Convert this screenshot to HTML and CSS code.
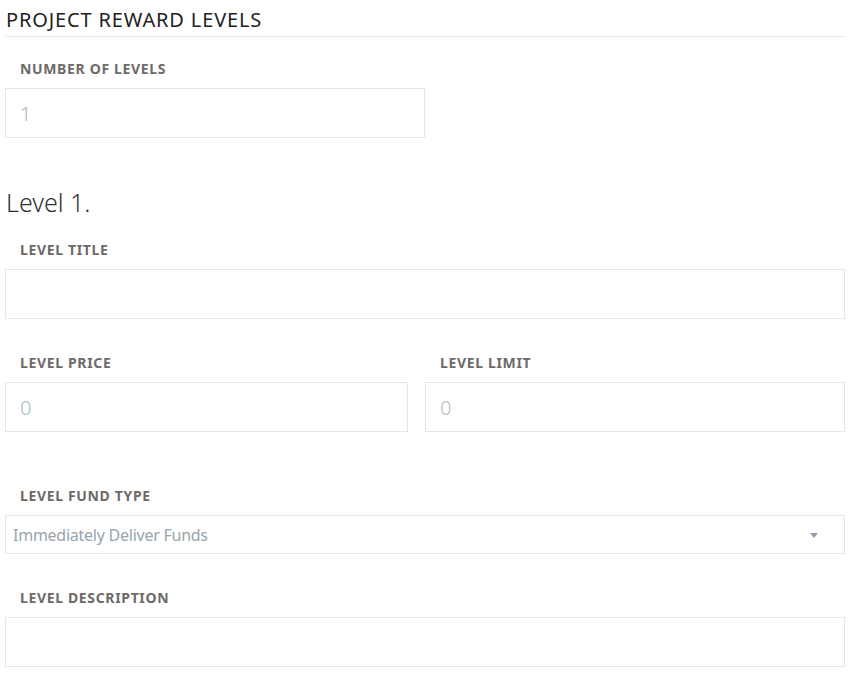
FILE: index.html
```html
<!DOCTYPE html>
<html lang="en">
<head>
<meta charset="utf-8">
<title>Project Reward Levels</title>
<link rel="stylesheet" href="styles.css">
</head>
<body>
<div class="page">
  <div class="section-title">PROJECT REWARD LEVELS</div>

  <div class="group first">
    <label class="label">NUMBER OF LEVELS</label>
    <input class="field half" type="text" placeholder="1">
  </div>

  <h2 class="level-heading">Level 1.</h2>

  <div class="group after-heading">
    <label class="label">LEVEL TITLE</label>
    <input class="field" type="text">
  </div>

  <div class="row two">
    <div class="group">
      <label class="label">LEVEL PRICE</label>
      <input class="field" type="text" placeholder="0">
    </div>
    <div class="group">
      <label class="label">LEVEL LIMIT</label>
      <input class="field" type="text" placeholder="0">
    </div>
  </div>

  <div class="group fund">
    <label class="label">LEVEL FUND TYPE</label>
    <div class="select">
      <span class="select-text">Immediately Deliver Funds</span>
      <span class="caret"></span>
    </div>
  </div>

  <div class="group desc">
    <label class="label">LEVEL DESCRIPTION</label>
    <input class="field" type="text">
  </div>
</div>
</body>
</html>
```

FILE: styles.css
```css
html, body {
  margin: 0;
  padding: 0;
  background: #ffffff;
}

body {
  font-family: "Noto Sans", "Open Sans", Arial, sans-serif;
  color: #222;
}

.page {
  width: 840px;
  padding: 0 11px 0 5px;
}

.section-title {
  font-size: 20px;
  line-height: 24px;
  height: 28px;
  padding-top: 8px;
  padding-left: 1px;
  letter-spacing: 0.85px;
  color: #222;
  border-bottom: 1px solid #e7e7e7;
}

.group {
  display: flex;
  flex-direction: column;
}

.group.first {
  padding-top: 21px;
}

.label {
  display: block;
  font-size: 14px;
  line-height: 22px;
  font-weight: 700;
  letter-spacing: 0.65px;
  color: #6d6a68;
  padding-left: 15px;
  margin-bottom: 8px;
}

.field {
  box-sizing: border-box;
  height: 50px;
  width: 100%;
  border: 1px solid #e6e6e6;
  border-radius: 0;
  padding: 0 14px;
  font-family: inherit;
  font-size: 20px;
  font-weight: 300;
  color: #333;
  background: #fff;
  outline: none;
  margin: 0;
}

.field::placeholder {
  color: #a9bac8;
}

.field.half {
  width: 420px;
}

.level-heading {
  margin: 49px 0 0 1px;
  font-size: 25px;
  line-height: 30px;
  font-weight: 300;
  color: #333;
}

.group.after-heading {
  margin-top: 22px;
}

.row.two {
  display: grid;
  grid-template-columns: 403px 420px;
  column-gap: 17px;
  margin-top: 33px;
}

.group.fund {
  margin-top: 53px;
}

.select {
  box-sizing: border-box;
  height: 39px;
  border: 1px solid #e6e6e6;
  display: flex;
  align-items: center;
  justify-content: space-between;
  padding: 0 26px 0 7px;
}

.select-text {
  font-size: 16px;
  letter-spacing: -0.25px;
  color: #98a4ae;
}

.caret {
  width: 0;
  height: 0;
  border-left: 4.5px solid transparent;
  border-right: 4.5px solid transparent;
  border-top: 5px solid #8d9ca8;
  margin-top: 2px;
}

.group.desc {
  margin-top: 33px;
}
```
